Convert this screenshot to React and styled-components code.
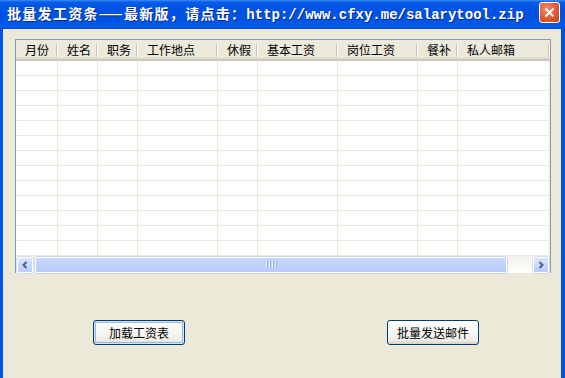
import styled, { createGlobalStyle } from 'styled-components';

const Global = createGlobalStyle`
	html, body {
		margin: 0;
		padding: 0;
		background: #ece9d8;
	}
	body {
		font-family: "Noto Sans CJK SC", "Liberation Sans", sans-serif;
		font-size: 12px;
	}
`;

const columns = [
	{ title: '月份', width: 42 },
	{ title: '姓名', width: 40 },
	{ title: '职务', width: 40 },
	{ title: '工作地点', width: 80 },
	{ title: '休假', width: 40 },
	{ title: '基本工资', width: 80 },
	{ title: '岗位工资', width: 80 },
	{ title: '餐补', width: 40 },
	{ title: '私人邮箱', width: 92 },
];

const ROWS = 13;
const template = columns.map(c => `${c.width}px`).join(' ');

const Window = styled.div`
	width: 565px;
	height: 378px;
	display: flex;
	flex-direction: column;
	overflow: hidden;
`;

const TitleBar = styled.div`
	height: 29px;
	flex: none;
	display: flex;
	align-items: center;
	padding: 0 5px 0 7px;
	background: linear-gradient(to bottom,
		#3d8cf5 0px, #0a5ee8 2px, #0055e5 6px, #0052e0 18px,
		#0058ea 24px, #005ef0 27px, #0048d4 29px);
`;

const Title = styled.div`
	flex: 1;
	color: #fff;
	font-weight: bold;
	font-size: 14px;
	letter-spacing: 1.3px;
	white-space: nowrap;
	text-shadow: 1px 1px 0 #0a2a8a;
	line-height: 16px;
	margin-top: -1px;
`;

const Url = styled.span`
	font-family: "Liberation Mono", monospace;
	font-size: 14px;
	letter-spacing: 0;
`;

const CloseButton = styled.div`
	width: 19px;
	height: 19px;
	margin-top: -4px;
	border: 1px solid #fff;
	border-radius: 3px;
	background: radial-gradient(circle at 35% 30%, #f08a66 0%, #e2582f 55%, #c8431c 100%);
	display: flex;
	align-items: center;
	justify-content: center;
`;

const Body = styled.div`
	flex: 1;
	background: #ece9d8;
	border-left: 3px solid #0055e5;
	border-right: 4px solid #0052e0;
	padding: 10px 10px 0 12px;
	display: flex;
	flex-direction: column;
`;

const ListView = styled.div`
	width: 536px;
	height: 234px;
	box-sizing: border-box;
	border: 1px solid #7f9db9;
	background: #fff;
	display: flex;
	flex-direction: column;
`;

const Header = styled.div`
	display: grid;
	grid-template-columns: ${template};
	height: 21px;
	flex: none;
	background: linear-gradient(to bottom, #ebeadb 0px, #ebeadb 17px, #e2decd 18px, #d6d2c2 19px, #cbc7b8 20px);
`;

const HeaderCell = styled.div`
	position: relative;
	padding-left: 9px;
	line-height: 19px;
	color: #000;
	white-space: nowrap;
	&::after {
		content: '';
		position: absolute;
		right: 1px;
		top: 4px;
		height: 13px;
		width: 1px;
		background: #c7c5b2;
		box-shadow: 1px 0 0 #fff;
	}
`;

const Rows = styled.div`
	flex: 1;
	display: flex;
	flex-direction: column;
`;

const Row = styled.div`
	display: grid;
	grid-template-columns: ${template};
	height: 15px;
`;

const Cell = styled.div`
	box-sizing: border-box;
	border-right: 1px solid #ebe9dc;
	border-bottom: 1px solid #ebe9dc;
`;

const ScrollBar = styled.div`
	height: 17px;
	flex: none;
	display: flex;
	align-items: center;
	padding: 0 1px;
	background: linear-gradient(to bottom, #f3f1ec, #fefefb);
`;

const ArrowButton = styled.div`
	width: 16px;
	height: 16px;
	box-sizing: border-box;
	border: 1px solid #fff;
	border-radius: 2px;
	background: linear-gradient(to bottom, #dbe6fd, #b8cdf8);
	box-shadow: 0 0 0 0.5px #b6c8ef;
	display: flex;
	align-items: center;
	justify-content: center;
`;

const Thumb = styled.div`
	width: 472px;
	height: 16px;
	margin-left: 2px;
	box-sizing: border-box;
	border: 1px solid #fff;
	border-radius: 2px;
	background: linear-gradient(to bottom, #c9d8fc, #b6cbf9);
	box-shadow: 0 0 0 0.5px #9fb6ea;
	display: flex;
	align-items: center;
	justify-content: center;
	gap: 1px;
`;

const Grip = styled.div`
	width: 1px;
	height: 7px;
	background: #eef3fe;
	box-shadow: 1px 0 0 #8fa8e3;
	margin-right: 1px;
`;

const Track = styled.div`
	flex: 1;
`;

const ButtonRow = styled.div`
	display: flex;
	gap: 202px;
	padding-left: 78px;
	margin-top: 47px;
`;

const PushButton = styled.button`
	width: 92px;
	height: 25px;
	box-sizing: border-box;
	border: 1px solid #003c74;
	border-radius: 3px;
	background: linear-gradient(to bottom, #ffffff 0%, #f4f4f0 60%, #ecebe6 85%, #d6d0c5 100%);
	box-shadow: ${p => (p.$default ? 'inset 0 0 0 1px #cee7ff, inset 0 0 0 2px #98b8ea' : 'none')};
	font-family: "Noto Sans CJK SC", sans-serif;
	font-size: 12px;
	color: #000;
	padding: 0;
`;

const Chevron = ({ dir }) => (
	<svg width="8" height="8" viewBox="0 0 8 8">
		<path
			d={dir === 'left' ? 'M5.5 1 L2.5 4 L5.5 7' : 'M2.5 1 L5.5 4 L2.5 7'}
			stroke="#4d6185"
			strokeWidth="2"
			fill="none"
		/>
	</svg>
);

const CloseIcon = () => (
	<svg width="11" height="11" viewBox="0 0 11 11">
		<path d="M1.5 1.5 L9.5 9.5 M9.5 1.5 L1.5 9.5" stroke="#fff" strokeWidth="2" />
	</svg>
);

export default function App() {
	return (
		<Window>
			<Global />
			<TitleBar>
				<Title>
					批量发工资条——最新版，请点击：<Url>http://www.cfxy.me/salarytool.zip</Url>
				</Title>
				<CloseButton>
					<CloseIcon />
				</CloseButton>
			</TitleBar>
			<Body>
				<ListView>
					<Header>
						{columns.map(c => (
							<HeaderCell key={c.title}>{c.title}</HeaderCell>
						))}
					</Header>
					<Rows>
						{Array.from({ length: ROWS }).map((_, r) => (
							<Row key={r}>
								{columns.map(c => (
									<Cell key={c.title} />
								))}
							</Row>
						))}
					</Rows>
					<ScrollBar>
						<ArrowButton>
							<Chevron dir="left" />
						</ArrowButton>
						<Thumb>
							<Grip />
							<Grip />
							<Grip />
							<Grip />
						</Thumb>
						<Track />
						<ArrowButton>
							<Chevron dir="right" />
						</ArrowButton>
					</ScrollBar>
				</ListView>
				<ButtonRow>
					<PushButton $default>加载工资表</PushButton>
					<PushButton>批量发送邮件</PushButton>
				</ButtonRow>
			</Body>
		</Window>
	);
}
